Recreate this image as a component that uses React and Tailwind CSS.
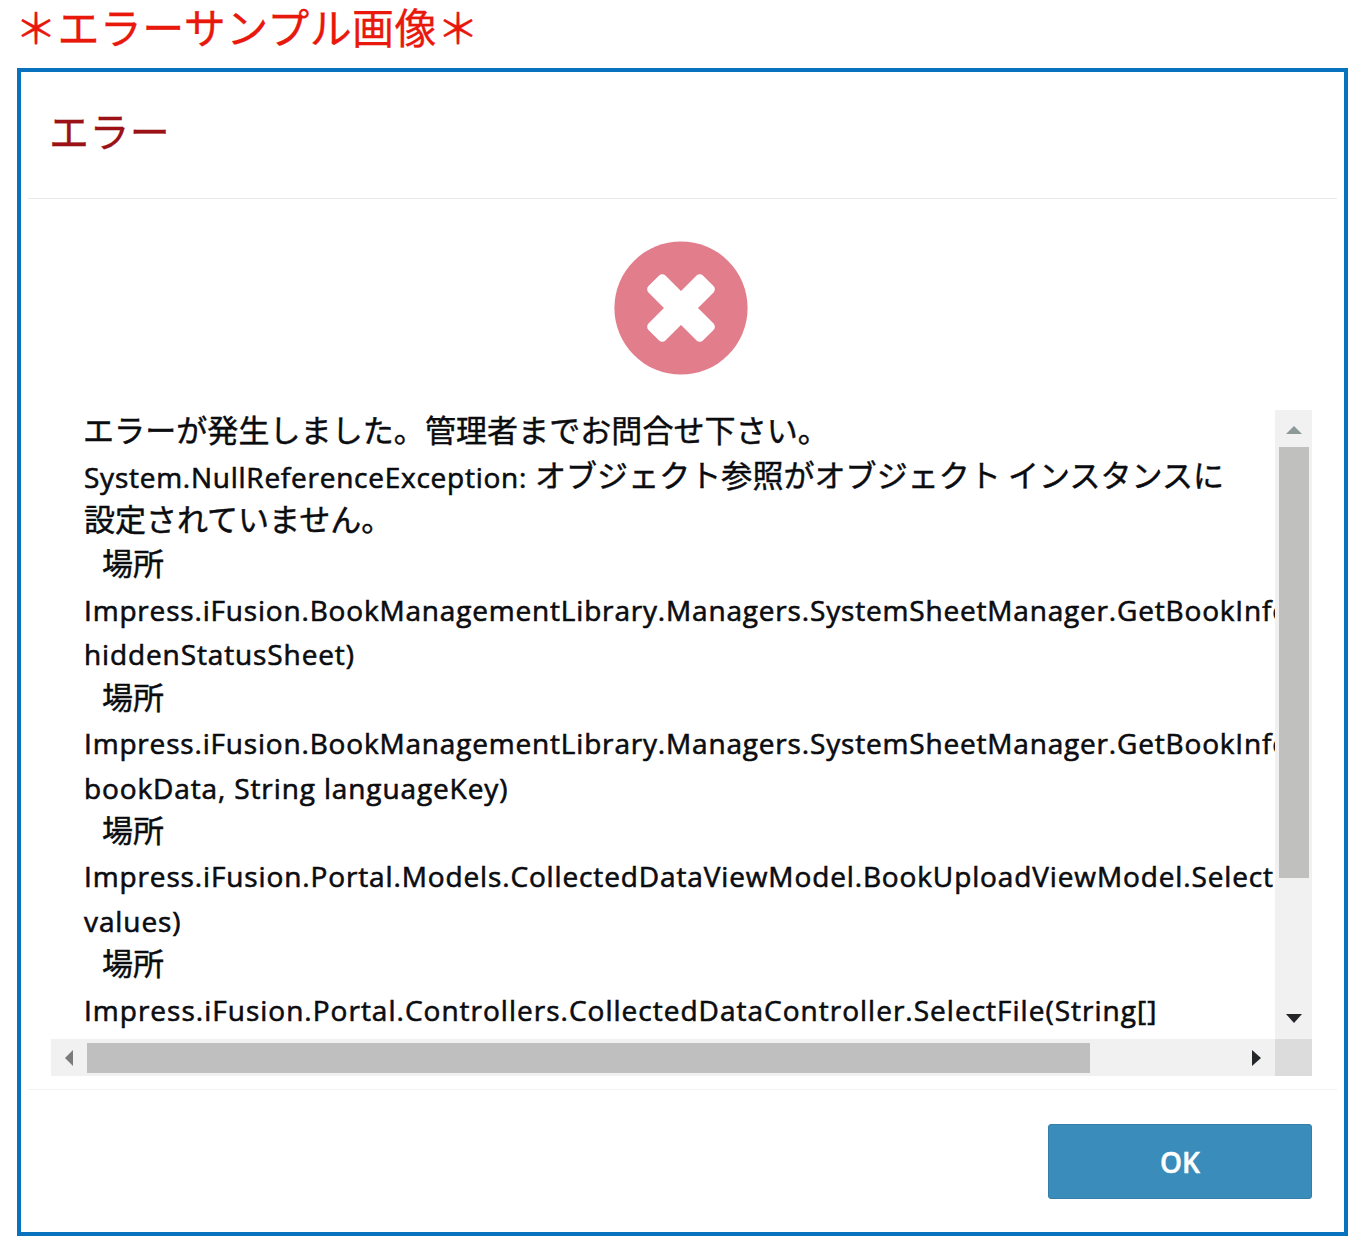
const latin = "font-['Open_Sans','Noto_Sans_CJK_JP',sans-serif] text-[28px] pb-[1px] [-webkit-text-stroke:0.6px_#0b0c10]";
const japanese = "font-['Noto_Sans_CJK_JP',sans-serif] text-[31px] pb-[8px] [-webkit-text-stroke:0.45px_#0b0c10]";

const lines = [
  { height: "h-[45px]", parts: [{ text: "エラーが発生しました。管理者までお問合せ下さい。", cls: "-ml-px tracking-[0.08px]", ja: true }] },
  {
    height: "h-[44px]",
    parts: [
      { text: "System.NullReferenceException:", cls: "w-[451px] tracking-[0.75px]" },
      { text: "オブジェクト参照がオブジェクト インスタンスに", cls: "tracking-[0.06px]", ja: true },
    ],
  },
  { height: "h-[44px]", parts: [{ text: "設定されていません。", cls: "", ja: true }] },
  { height: "h-[45px]", parts: [{ text: "場所", cls: "pl-[18px]", ja: true }] },
  { height: "h-[44px]", parts: [{ text: "Impress.iFusion.BookManagementLibrary.Managers.SystemSheetManager.GetBookInfo", cls: "tracking-[0.82px]" }] },
  { height: "h-[45px]", parts: [{ text: "hiddenStatusSheet)", cls: "tracking-[0.88px]" }] },
  { height: "h-[44px]", parts: [{ text: "場所", cls: "pl-[18px]", ja: true }] },
  { height: "h-[45px]", parts: [{ text: "Impress.iFusion.BookManagementLibrary.Managers.SystemSheetManager.GetBookInfo", cls: "tracking-[0.82px]" }] },
  { height: "h-[44px]", parts: [{ text: "bookData, String languageKey)", cls: "tracking-[0.88px]" }] },
  { height: "h-[44px]", parts: [{ text: "場所", cls: "pl-[18px]", ja: true }] },
  { height: "h-[45px]", parts: [{ text: "Impress.iFusion.Portal.Models.CollectedDataViewModel.BookUploadViewModel.Select", cls: "tracking-[0.87px]" }] },
  { height: "h-[44px]", parts: [{ text: "values)", cls: "tracking-[0.9px]" }] },
  { height: "h-[45px]", parts: [{ text: "場所", cls: "pl-[18px]", ja: true }] },
  { height: "h-[45px]", parts: [{ text: "Impress.iFusion.Portal.Controllers.CollectedDataController.SelectFile(String[]", cls: "tracking-[1.01px]" }] },
];

function ErrorIcon() {
  return (
    <svg className="h-[134px] w-[134px]" viewBox="0 0 134 134" aria-hidden="true">
      <circle cx="67" cy="67" r="66.6" fill="#e27d8b" />
      <g fill="#fff" transform="rotate(45 67 67)">
        <rect x="55" y="28.5" width="24" height="77" rx="4.5" />
        <rect x="28.5" y="55" width="77" height="24" rx="4.5" />
      </g>
    </svg>
  );
}

function Arrow({ points, color }) {
  return (
    <svg className="h-4 w-4" viewBox="0 0 16 16" aria-hidden="true">
      <polygon points={points} fill={color} />
    </svg>
  );
}

function Message() {
  return (
    <div className="min-w-0 flex-1 overflow-hidden pl-[33px] text-[#0b0c10]">
      {lines.map((line, i) => (
        <div key={i} className={`flex items-center whitespace-nowrap leading-none ${line.height}`}>
          {line.parts.map((part, j) => (
            <span key={j} className={`shrink-0 ${part.ja ? japanese : latin} ${part.cls}`}>
              {part.text}
            </span>
          ))}
        </div>
      ))}
    </div>
  );
}

export default function App() {
  return (
    <div className="h-[1260px] w-[1368px] overflow-hidden bg-white pl-[17px]">
      <h1 className="-ml-[2px] flex h-[68px] items-start whitespace-nowrap font-['Noto_Sans_CJK_JP',sans-serif] text-[42px] leading-[52px] tracking-[0.4px] text-[#e8190c] [-webkit-text-stroke:0.3px_#e8190c]">
        ＊エラーサンプル画像＊
      </h1>
      <section className="flex h-[1168px] w-[1331px] flex-col border-4 border-[#0872bf] bg-white">
        <header className="mx-[7px] flex h-[127px] items-center border-b border-[#e8ebec] pb-[11px] pl-[21px] font-['Noto_Sans_CJK_JP',sans-serif] text-[40px] leading-none tracking-[0.4px] text-[#9b1115] [-webkit-text-stroke:0.3px_#9b1115]">
          エラー
        </header>
        <div className="flex h-[211px] justify-center pr-[4px] pt-[42px]">
          <ErrorIcon />
        </div>
        <div className="ml-[30px] h-[666px] w-[1261px]">
          <div className="flex h-[629px]">
            <Message />
            <div className="flex w-[37px] shrink-0 flex-col items-center bg-[#f1f1f1]">
              <div className="flex h-[37px] items-center pt-[3px]">
                <Arrow points="0,12 8,4 16,12" color="#8d9999" />
              </div>
              <div className="h-[431px] w-[30px] bg-[#c0c0bf]" />
              <div className="mt-auto flex h-[42px] items-center">
                <Arrow points="0,4 16,4 8,13" color="#24262a" />
              </div>
            </div>
          </div>
          <div className="flex h-[37px]">
            <div className="flex min-w-0 flex-1 items-center bg-[#f1f1f1]">
              <div className="flex w-[36px] justify-center">
                <Arrow points="12,0 12,16 4,8" color="#7b7b7b" />
              </div>
              <div className="h-[30px] w-[1003px] bg-[#bfbfbf]" />
              <div className="ml-auto mr-[10px]">
                <Arrow points="3,0 3,16 12,8" color="#24262a" />
              </div>
            </div>
            <div className="w-[37px] bg-[#dcdcdc]" />
          </div>
        </div>
        <footer className="mx-[7px] mt-[13px] flex flex-1 justify-end border-t border-[#f0f2f3] pr-[25px] pt-[34px]">
          <button className="h-[75px] w-[264px] rounded-[3px] border border-[#347fa9] bg-[#3a8cba] pt-[1px] font-['Open_Sans',sans-serif] text-[28px] font-semibold leading-none text-white [-webkit-text-stroke:0.5px_#fff]">
            OK
          </button>
        </footer>
      </section>
    </div>
  );
}
